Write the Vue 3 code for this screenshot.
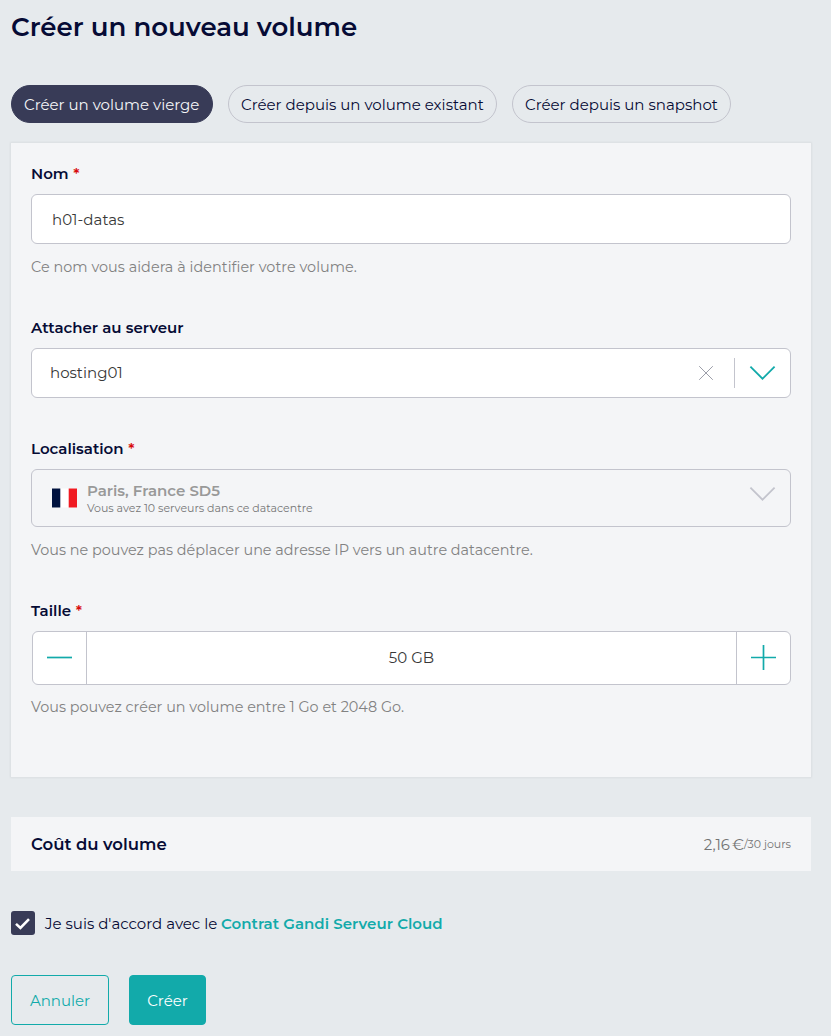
<script setup>
import { ref } from 'vue'

const tabs = [
  { label: 'Créer un volume vierge', key: 'blank' },
  { label: 'Créer depuis un volume existant', key: 'existing' },
  { label: 'Créer depuis un snapshot', key: 'snapshot' },
]
const activeTab = ref('blank')
const size = ref(50)
const agreed = ref(true)
</script>

<template>
  <main class="page">
    <h1 class="title">Créer un nouveau volume</h1>

    <nav class="tabs">
      <button
        v-for="tab in tabs"
        :key="tab.key"
        class="tab"
        :class="[tab.key, { active: tab.key === activeTab }]"
        @click="activeTab = tab.key"
      >{{ tab.label }}</button>
    </nav>

    <section class="card">
      <div class="field">
        <div class="label"><span>Nom</span><span class="req">*</span></div>
        <div class="control name-input">h01-datas</div>
        <p class="help help-name">Ce nom vous aidera à identifier votre volume.</p>
      </div>

      <div class="field">
        <div class="label">Attacher au serveur</div>
        <div class="control select">
          <span class="server-value">hosting01</span>
          <svg class="clear" width="16" height="16" viewBox="0 0 16 16">
            <path d="M1.2 1.2 14.8 14.8M14.8 1.2 1.2 14.8" fill="none" stroke="#9c9ea9" stroke-width="1" />
          </svg>
          <span class="divider"></span>
          <svg class="chevron" width="27" height="16" viewBox="0 0 27 16">
            <path d="M1.4 1.6 13.5 13.7 25.6 1.6" fill="none" stroke="#12aaaa" stroke-width="1.8" />
          </svg>
        </div>
      </div>

      <div class="field">
        <div class="label"><span>Localisation</span><span class="req">*</span></div>
        <div class="control location">
          <svg class="flag" width="25" height="20" viewBox="0 0 25 20">
            <rect y="0.5" width="25" height="19" fill="#fff" />
            <rect y="0.5" width="8.3" height="19" fill="#00123f" />
            <rect x="16.7" y="0.5" width="8.3" height="19" fill="#f01a22" />
          </svg>
          <div class="place">
            <div class="city">Paris, France SD5</div>
            <div class="servers">Vous avez 10 serveurs dans ce datacentre</div>
          </div>
          <svg class="chevron" width="27" height="16" viewBox="0 0 27 16">
            <path d="M1.4 1.6 13.5 13.7 25.6 1.6" fill="none" stroke="#c3c4cd" stroke-width="1.8" />
          </svg>
        </div>
        <p class="help">Vous ne pouvez pas déplacer une adresse IP vers un autre datacentre.</p>
      </div>

      <div class="field">
        <div class="label"><span>Taille</span><span class="req">*</span></div>
        <div class="stepper">
          <button class="step" aria-label="Diminuer" @click="size--">
            <svg width="25" height="25" viewBox="0 0 25 25">
              <path d="M0 12.5h25" stroke="#12aaaa" stroke-width="1.7" />
            </svg>
          </button>
          <div class="amount">{{ size }} GB</div>
          <button class="step" aria-label="Augmenter" @click="size++">
            <svg width="25" height="25" viewBox="0 0 25 25">
              <path d="M0 12.5h25M12.5 0v25" stroke="#12aaaa" stroke-width="1.7" />
            </svg>
          </button>
        </div>
        <p class="help help-size">Vous pouvez créer un volume entre 1 Go et 2048 Go.</p>
      </div>
    </section>

    <section class="cost">
      <h2 class="cost-title">Coût du volume</h2>
      <div class="price">
        <span class="value">2,16</span><span class="euro">€</span><span class="period">/30 jours</span>
      </div>
    </section>

    <div class="agreement">
      <button class="checkbox" role="checkbox" :aria-checked="agreed" @click="agreed = !agreed">
        <svg v-if="agreed" width="24" height="24" viewBox="0 0 24 24">
          <path d="M5 12.9 9.4 16.9 18 8.2" fill="none" stroke="#fff" stroke-width="2.6" />
        </svg>
      </button>
      <span class="agree-text">Je suis d'accord avec le</span>
      <a class="contract">Contrat Gandi Serveur Cloud</a>
    </div>

    <div class="actions">
      <button class="action cancel">Annuler</button>
      <button class="action create">Créer</button>
    </div>
  </main>
</template>

<style>
html,
body {
  background: #e6eaed;
}
</style>

<style scoped>
.page {
  box-sizing: border-box;
  width: 831px;
  height: 1036px;
  padding: 11px 20px 0 11px;
  background: #e6eaed;
  color: #060b35;
  font: 15px/20px Montserrat, Inter, sans-serif;
  font-variant-ligatures: none;
  white-space: nowrap;
  overflow: hidden;
}
button {
  box-sizing: border-box;
  margin: 0;
  padding: 0;
  border: 0;
  background: none;
  color: inherit;
  font: inherit;
}
.title {
  margin: 0 0 42px;
  font-size: 26px;
  font-weight: 600;
  line-height: 32px;
}
.tabs {
  display: flex;
  gap: 15px;
}
.tab {
  height: 38px;
  padding: 2px 0 0 12px;
  border: 1px solid #c3c4cd;
  border-radius: 19px;
  text-align: left;
}
.tab.active {
  border-color: #383b57;
  background: #383b57;
  color: #f4f5f7;
}
.blank { width: 202px; }
.existing { width: 269px; }
.snapshot { width: 219px; }
.card {
  box-sizing: border-box;
  height: 634px;
  margin-top: 20px;
  padding: 21px 20px 0;
  background: #f4f5f7;
  box-shadow: 0 0 2px 1px rgba(0, 0, 0, 0.05);
}
.field + .field {
  margin-top: 41px;
}
.label {
  display: flex;
  gap: 4.6px;
  margin-bottom: 10px;
  font-weight: 600;
}
.req {
  color: #d80a0a;
}
.control {
  box-sizing: border-box;
  display: flex;
  align-items: center;
  height: 50px;
  border: 1px solid #c3c4cd;
  border-radius: 6px;
  background: #fff;
  color: #383838;
}
.name-input {
  padding: 1px 0 0 20px;
}
.select {
  padding: 0 14px 0 18px;
}
.server-value {
  flex: 1;
}
.divider {
  width: 1px;
  height: 30px;
  margin: 0 14px 0 20px;
  background: #c3c4cd;
}
.help {
  margin: 13px 0 0;
  color: #828282;
  font-size: 14.4px;
}
.help-name {
  letter-spacing: 0.04px;
}
.help-size {
  margin-top: 12px;
}
.location {
  height: 58px;
  padding: 0 14px 0 20px;
  background: #f4f5f7;
}
.flag {
  margin-right: 10px;
}
.place {
  flex: 1;
}
.city {
  height: 20px;
  color: #999;
  font-weight: 600;
  line-height: 22px;
}
.servers {
  padding-top: 1px;
  color: #777;
  font-size: 11px;
  line-height: 15px;
}
.location .chevron {
  margin-bottom: 8px;
}
.stepper {
  box-sizing: border-box;
  display: flex;
  height: 54px;
  margin-left: 1px;
  border: 1px solid #c3c4cd;
  border-radius: 6px;
  background: #fff;
}
.step {
  display: flex;
  align-items: center;
  justify-content: center;
  width: 53px;
  padding-bottom: 1px;
}
.amount {
  flex: 1;
  border: solid #c3c4cd;
  border-width: 0 1px;
  color: #383838;
  line-height: 52px;
  text-align: center;
}
.cost {
  display: flex;
  align-items: center;
  justify-content: space-between;
  height: 54px;
  margin-top: 40px;
  padding: 0 20px;
  background: #f4f5f7;
}
.cost-title {
  margin: 0;
  font-size: 16.5px;
  font-weight: 600;
}
.price {
  display: flex;
  align-items: center;
  color: #737373;
}
.value,
.euro {
  padding-top: 2px;
}
.euro {
  margin-left: 2px;
}
.period {
  font-size: 11px;
}
.agreement {
  display: flex;
  align-items: center;
  height: 24px;
  margin-top: 40px;
}
.checkbox {
  width: 24px;
  height: 24px;
  margin-right: 10px;
  border-radius: 3px;
  background: #383b57;
}
.checkbox svg {
  display: block;
}
.agree-text,
.contract {
  padding-top: 2px;
}
.agree-text {
  width: 176px;
}
.contract {
  color: #12aaaa;
  font-weight: 600;
  letter-spacing: 0.03px;
}
.actions {
  display: flex;
  gap: 20px;
  margin-top: 40px;
}
.action {
  height: 50px;
  padding-top: 2px;
  border: 1px solid #12aaaa;
  border-radius: 4px;
}
.cancel {
  width: 98px;
  color: #12aaaa;
}
.create {
  width: 77px;
  background: #12aaaa;
  color: #fff;
}
</style>
